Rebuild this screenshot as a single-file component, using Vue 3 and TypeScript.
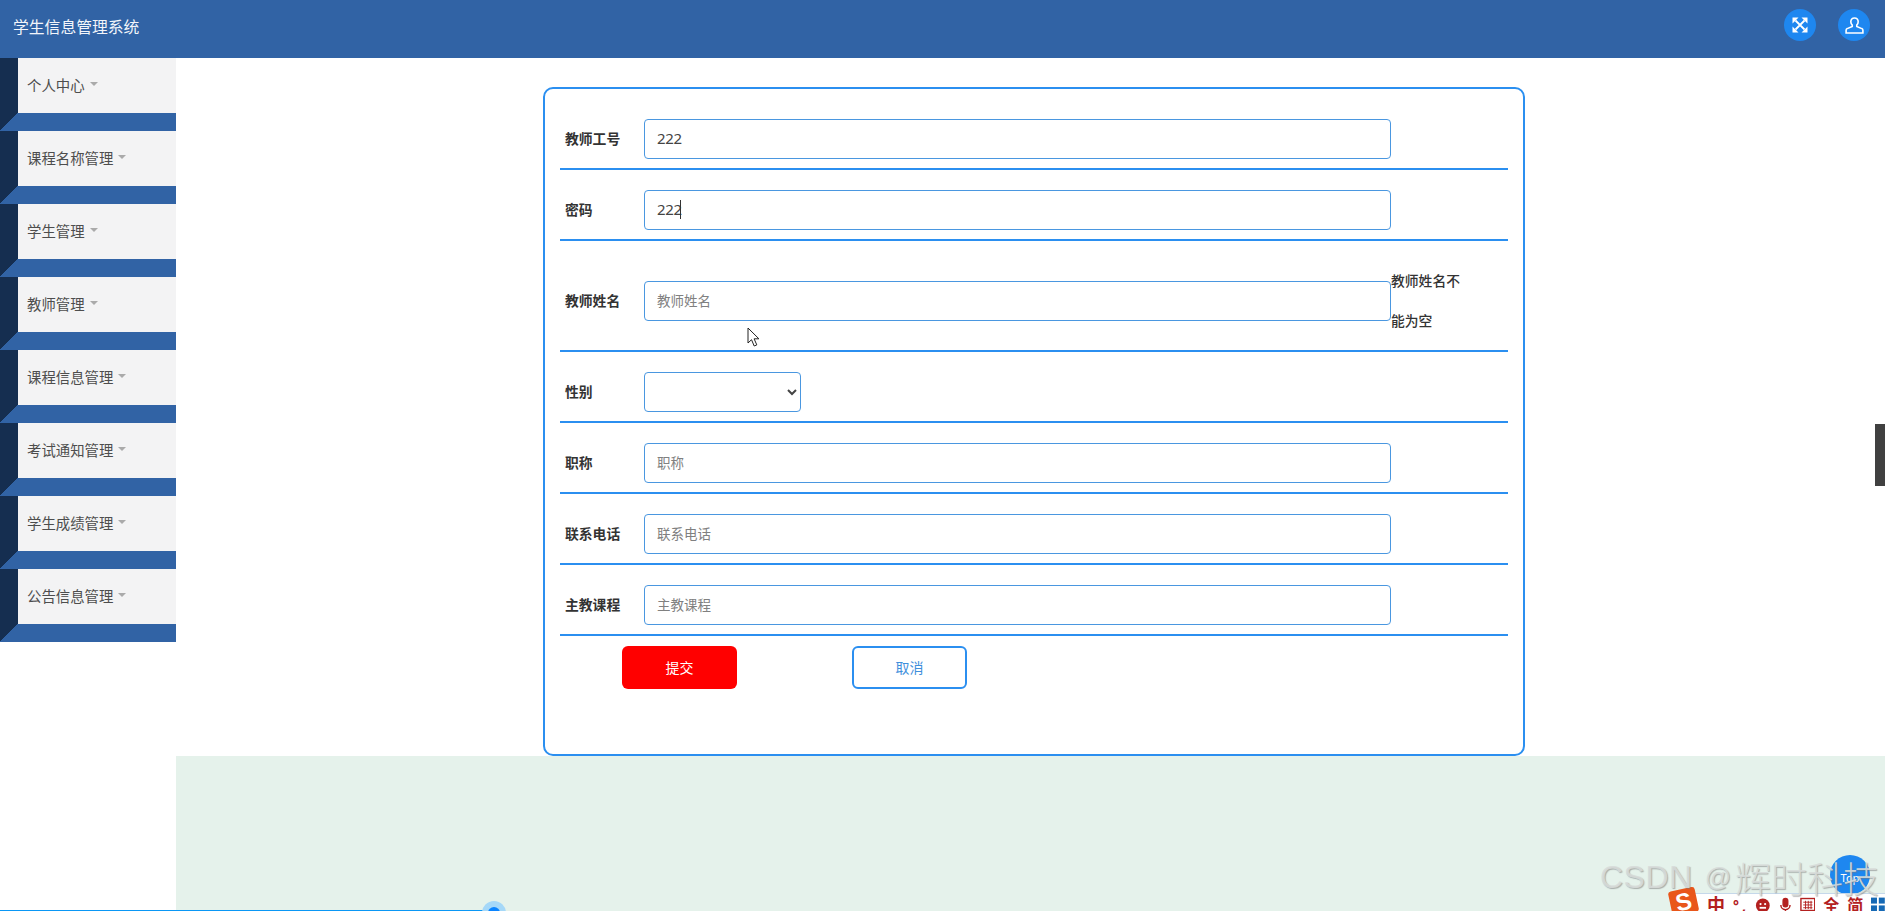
<script setup lang="ts">
const menus: string[] = ['个人中心', '课程名称管理', '学生管理', '教师管理', '课程信息管理', '考试通知管理', '学生成绩管理', '公告信息管理']
</script>

<template>
  <div class="page">
    <header class="topbar">
      <span class="brand">学生信息管理系统</span>
      <div class="actions">
        <span class="round">
          <svg width="16" height="16" viewBox="0 0 16 16" fill="#fff" stroke="none">
            <path d="M3.500 3.500l9 9M12.500 3.500l-9 9" fill="none" stroke="#fff" stroke-width="1.800" />
            <path d="M0.500 0.500h6l-6 6zM15.500 0.500v6l-6-6zM15.500 15.500h-6l6-6zM0.500 15.500v-6l6 6z" />
          </svg>
        </span>
        <span class="round">
          <svg width="19" height="17" viewBox="0 0 20 18" fill="none" stroke="#fff" stroke-width="1.700">
            <path d="M10 1c-2.500 0-3.900 1.700-3.900 3.900 0 1.500.7 2.800 1.500 3.600v1.500l-5.300 2.300c-.8.300-1.200.900-1.200 1.600V17h17.800v-3.100c0-.7-.4-1.300-1.200-1.600L12.400 10V8.500c.8-.8 1.500-2.100 1.500-3.600C13.900 2.700 12.500 1 10 1z" />
          </svg>
        </span>
      </div>
    </header>

    <div class="body">
      <aside class="sidebar">
        <div v-for="m in menus" :key="m" class="menu-item">
          <div class="menu-main">
            <span class="menu-edge"></span>
            <span class="menu-label">{{ m }}<i class="caret"></i></span>
          </div>
          <div class="menu-foot"></div>
        </div>
      </aside>

      <main class="main">
        <div class="content">
          <form class="card" @submit.prevent>
            <div class="row">
              <label class="lbl">教师工号</label>
              <div class="field"><input class="ipt" value="222" /></div>
            </div>
            <div class="row">
              <label class="lbl">密码</label>
              <div class="field caret-field"><input class="ipt" value="222" /><span class="text-caret"></span></div>
            </div>
            <div class="row">
              <label class="lbl">教师姓名</label>
              <div class="field"><input class="ipt" placeholder="教师姓名" /></div>
              <div class="err">教师姓名不能为空</div>
            </div>
            <div class="row">
              <label class="lbl">性别</label>
              <select class="sel"><option></option></select>
            </div>
            <div class="row">
              <label class="lbl">职称</label>
              <div class="field"><input class="ipt" placeholder="职称" /></div>
            </div>
            <div class="row">
              <label class="lbl">联系电话</label>
              <div class="field"><input class="ipt" placeholder="联系电话" /></div>
            </div>
            <div class="row last">
              <label class="lbl">主教课程</label>
              <div class="field"><input class="ipt" placeholder="主教课程" /></div>
            </div>
            <div class="btns">
              <button class="btn submit" type="button">提交</button>
              <button class="btn cancel" type="button">取消</button>
            </div>
          </form>
        </div>
        <div class="green"></div>
      </main>
    </div>

    <svg class="cursor" width="14" height="21" viewBox="0 0 14 21">
      <path d="M1 1v15l3.500-3.300 2.700 6.300 2.600-1.100-2.700-6.100h4.800z" fill="#fff" stroke="#222" stroke-width="1" />
    </svg>
    <div class="side-tab"></div>
    <div class="progress"></div>
    <div class="progress-dot"></div>
    <div class="to-top">Top</div>
    <div class="ime">
      <span class="ime-logo">S</span>
      <span class="ime-t big">中</span>
      <span class="ime-t small">°,</span>
      <svg width="17" height="17" viewBox="0 0 17 17"><circle cx="8.500" cy="8.500" r="7.500" fill="#b3201f" /><circle cx="6" cy="7" r="1.200" fill="#fff" /><circle cx="11" cy="7" r="1.200" fill="#fff" /><rect x="5" y="10" width="7" height="2" fill="#fff" /></svg>
      <svg width="14" height="17" viewBox="0 0 14 17" fill="none" stroke="#b3201f" stroke-width="1.600"><rect x="4.500" y="1" width="5" height="9" rx="2.500" fill="#b3201f" /><path d="M2 8a5 5 0 0 0 10 0M7 13v3M4 16h6" /></svg>
      <svg width="17" height="15" viewBox="0 0 17 15" fill="none" stroke="#b3201f" stroke-width="1.500"><rect x="1" y="1" width="15" height="13" /><path d="M3.500 5h10M3.500 8h10M3.500 11h10M6 3.500v9M9 3.500v9M12 3.500v9" stroke-width="1" /></svg>
      <span class="ime-t">全</span>
      <span class="ime-t">简</span>
      <svg width="15" height="15" viewBox="0 0 15 15" fill="#1669b5"><rect x="0" y="0" width="6.500" height="6.500" /><rect x="8.500" y="0" width="6.500" height="6.500" /><rect x="0" y="8.500" width="6.500" height="6.500" /><rect x="8.500" y="8.500" width="6.500" height="6.500" /></svg>
    </div>
    <div class="watermark"><span class="wm-a">CSDN</span><span class="wm-b">@</span><span class="wm-c">辉时科技</span></div>
  </div>
</template>

<style>
html, body { margin: 0; padding: 0; overflow: hidden; background: #fff; }
</style>

<style scoped>
.page {
  position: relative;
  display: flex;
  flex-direction: column;
  width: 1885px;
  height: 911px;
  overflow: hidden;
  font-family: "Noto Sans", "Noto Sans CJK SC", sans-serif;
  color: #333;
}
.topbar {
  flex: 0 0 58px;
  box-sizing: border-box;
  display: flex;
  align-items: center;
  justify-content: space-between;
  padding: 0 15px 8px 13px;
  background: #3163a5;
}
.brand { font-size: 15.800px; color: #f2f5fa; margin-top: 3px; }
.actions { display: flex; gap: 22px; }
.round {
  width: 32px;
  height: 32px;
  border-radius: 50%;
  background: #1e87f0;
  display: flex;
  align-items: center;
  justify-content: center;
}
.body { flex: 1; display: flex; min-height: 0; }
.sidebar { flex: 0 0 176px; display: flex; flex-direction: column; }
.menu-item { height: 73px; display: flex; flex-direction: column; }
.menu-main { height: 55px; display: flex; }
.menu-edge { width: 18px; background: #152e50; }
.menu-label {
  flex: 1;
  background: #f3f3f4;
  padding: 0 0 2px 9px;
  display: flex;
  align-items: center;
  font-size: 14.400px;
  color: #4d4d4d;
}
.caret {
  margin-left: 5px;
  margin-top: -2px;
  width: 0;
  height: 0;
  border-left: 4px solid transparent;
  border-right: 4px solid transparent;
  border-top: 4px solid #aaa;
}
.menu-foot {
  height: 18px;
  background: linear-gradient(135deg, #152e50 0 12.700px, #3163a5 12.700px);
}
.main { flex: 1; display: flex; flex-direction: column; min-width: 0; }
.content { flex: 0 0 698px; box-sizing: border-box; padding-top: 29px; }
.green { flex: 1; background: #e5f2eb; }
.card {
  box-sizing: border-box;
  display: block;
  margin-left: 367px;
  width: 982px;
  height: 669px;
  padding: 30px 15px 0 15px;
  border: 2px solid #2b8ff0;
  border-radius: 10px;
  background: #fff;
}
.row {
  display: flex;
  align-items: center;
  padding-bottom: 9px;
  margin-bottom: 20px;
  border-bottom: 2px solid #2b8ff0;
}
.row.last { margin-bottom: 0; }
.lbl {
  flex: 0 0 79px;
  padding-left: 5px;
  margin-top: -2px;
  font-size: 13.800px;
  font-weight: 700;
  color: #333;
}
.field { position: relative; flex: 0 0 747px; }
.ipt {
  display: block;
  box-sizing: border-box;
  width: 100%;
  height: 40px;
  padding: 0 12px 2px;
  border: 1px solid #4a97e0;
  border-radius: 4px;
  outline: none;
  background: #fff;
  font-family: inherit;
  font-size: 15px;
  letter-spacing: -0.300px;
  color: #444;
}
.ipt::placeholder { font-size: 13.500px; letter-spacing: 0; color: #808080; opacity: 1; }
.text-caret {
  position: absolute;
  left: 36px;
  top: 10px;
  width: 1px;
  height: 19px;
  background: #333;
}
.err {
  flex: 0 0 73px;
  font-size: 13.800px;
  font-weight: 500;
  line-height: 40px;
  color: #333;
}
.sel {
  flex: 0 0 157px;
  width: 157px;
  height: 40px;
  border: 1px solid #4a97e0;
  border-radius: 4px;
  background: #fff;
  color: #444;
  outline: none;
}
.btns { display: flex; gap: 115px; padding: 10px 0 0 62px; }
.btn {
  box-sizing: border-box;
  width: 115px;
  height: 43px;
  padding: 0 0 2px;
  border-radius: 6px;
  font-family: inherit;
  font-size: 14px;
  cursor: pointer;
}
.submit { border: 0; background: #ff0000; color: #fff; }
.cancel { border: 2px solid #2b8ff0; background: #fff; color: #3f8fdc; }
.cursor { position: absolute; left: 747px; top: 327px; }
.side-tab {
  position: absolute;
  right: 0;
  top: 424px;
  width: 10px;
  height: 62px;
  background: #404040;
}
.progress {
  position: absolute;
  left: 0;
  bottom: 0;
  width: 494px;
  height: 1px;
  background: #0a97f5;
}
.progress-dot {
  position: absolute;
  left: 488px;
  top: 907px;
  width: 12px;
  height: 12px;
  border-radius: 50%;
  background: #0a84ff;
  box-shadow: 0 0 0 6px #a5d8f8;
}
.to-top {
  position: absolute;
  left: 1830px;
  top: 855px;
  width: 40px;
  height: 40px;
  border-radius: 50%;
  background: #1e87f0;
  color: #fff;
  font-size: 11px;
  line-height: 46px;
  text-align: center;
}
.ime {
  position: absolute;
  left: 1695px;
  top: 893px;
  width: 190px;
  height: 18px;
  box-sizing: border-box;
  display: flex;
  align-items: flex-start;
  gap: 8px;
  padding: 3px 0 0 12px;
  background: #fff;
  border-top: 1px solid #c5d8ea;
}
.ime-logo {
  position: absolute;
  left: -25px;
  top: -5px;
  width: 27px;
  height: 25px;
  border-radius: 3px;
  background: #e9561a;
  color: #fff;
  font-family: "Liberation Sans", sans-serif;
  font-size: 24px;
  font-weight: 700;
  line-height: 25px;
  text-align: center;
  transform: rotate(-12deg);
}
.ime-t { font-size: 16px; line-height: 17px; font-weight: 700; color: #b3201f; }
.ime-t.big { font-size: 18px; }
.ime-t.small { font-size: 14px; width: 14px; letter-spacing: 3px; }
.watermark {
  position: absolute;
  left: 1600px;
  top: 856px;
  display: flex;
  align-items: center;
  height: 42px;
  font-family: "Liberation Sans", "Noto Sans CJK SC", sans-serif;
  color: rgba(216, 220, 218, 0.9);
  text-shadow: 1px 1px 1px rgba(120, 120, 120, 0.55);
  white-space: nowrap;
}
.wm-a { font-size: 32px; margin-right: 12px; letter-spacing: 0.500px; }
.wm-b { font-size: 26px; margin-right: 4px; }
.wm-c { font-size: 36px; font-weight: 300; }
</style>
